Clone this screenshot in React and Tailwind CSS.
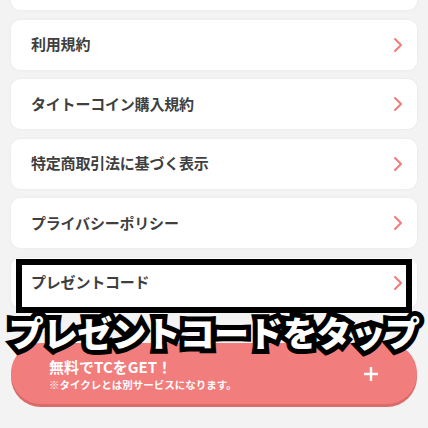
import React from 'react';

const items = ['利用規約', 'タイトーコイン購入規約', '特定商取引法に基づく表示', 'プライバシーポリシー', 'プレゼントコード'];

const Chevron = () => (
  <svg width="10" height="16" viewBox="0 0 10 16" fill="none">
    <path d="M2 2l6 6-6 6" stroke="#f27b7b" strokeWidth="2" strokeLinecap="round" strokeLinejoin="round" />
  </svg>
);

const Row = ({ label }) => (
  <div className="h-[50px] bg-white rounded-[9px] shadow-[0_0_3px_rgba(0,0,0,0.06)] flex items-center justify-between pl-[20px] pr-[14px]">
    <span className="text-[15px] font-bold text-[#3f3f3f] tracking-[-0.2px]">{label}</span>
    <Chevron />
  </div>
);

export default function App() {
  return (
    <div
      className="relative w-[428px] h-[428px] overflow-hidden bg-[#f3f3f3]"
      style={{ fontFamily: '"Noto Sans CJK JP", "Noto Sans", sans-serif' }}
    >
      <div className="flex flex-col gap-[9.5px] px-[11px] -mt-[40px]">
        <div className="h-[50px] bg-white rounded-[9px] shadow-[0_0_3px_rgba(0,0,0,0.06)]" />
        {items.map((t) => (
          <Row key={t} label={t} />
        ))}

        {/* free TC button */}
        <div className="mt-[26px] h-[61px] rounded-[30px] bg-[#f27d7d] shadow-[0_3px_0_#d96b6b] flex items-center justify-between pl-[38px] pr-[38px]">
          <div className="flex flex-col text-white font-bold leading-none pt-[2px]">
            <span className="text-[15px]">無料でTCをGET！</span>
            <span className="text-[10.5px] mt-[6px]">※タイクレとは別サービスになります。</span>
          </div>
          <svg width="16" height="16" viewBox="0 0 16 16">
            <path d="M8 1v14M1 8h14" stroke="#fff" strokeWidth="2.4" />
          </svg>
        </div>
      </div>

      {/* highlight box */}
      <div className="absolute left-[16px] top-[259px] w-[396px] h-[54px] border-[6px] border-black" />

      {/* caption */}
      <div className="absolute left-0 top-[314px] w-[428px] text-center">
        <span className="text-[35px] font-black text-white leading-none tracking-[-0.8px] [-webkit-text-stroke:10px_#000] [paint-order:stroke_fill]">
          プレゼントコードをタップ
        </span>
      </div>
    </div>
  );
}
